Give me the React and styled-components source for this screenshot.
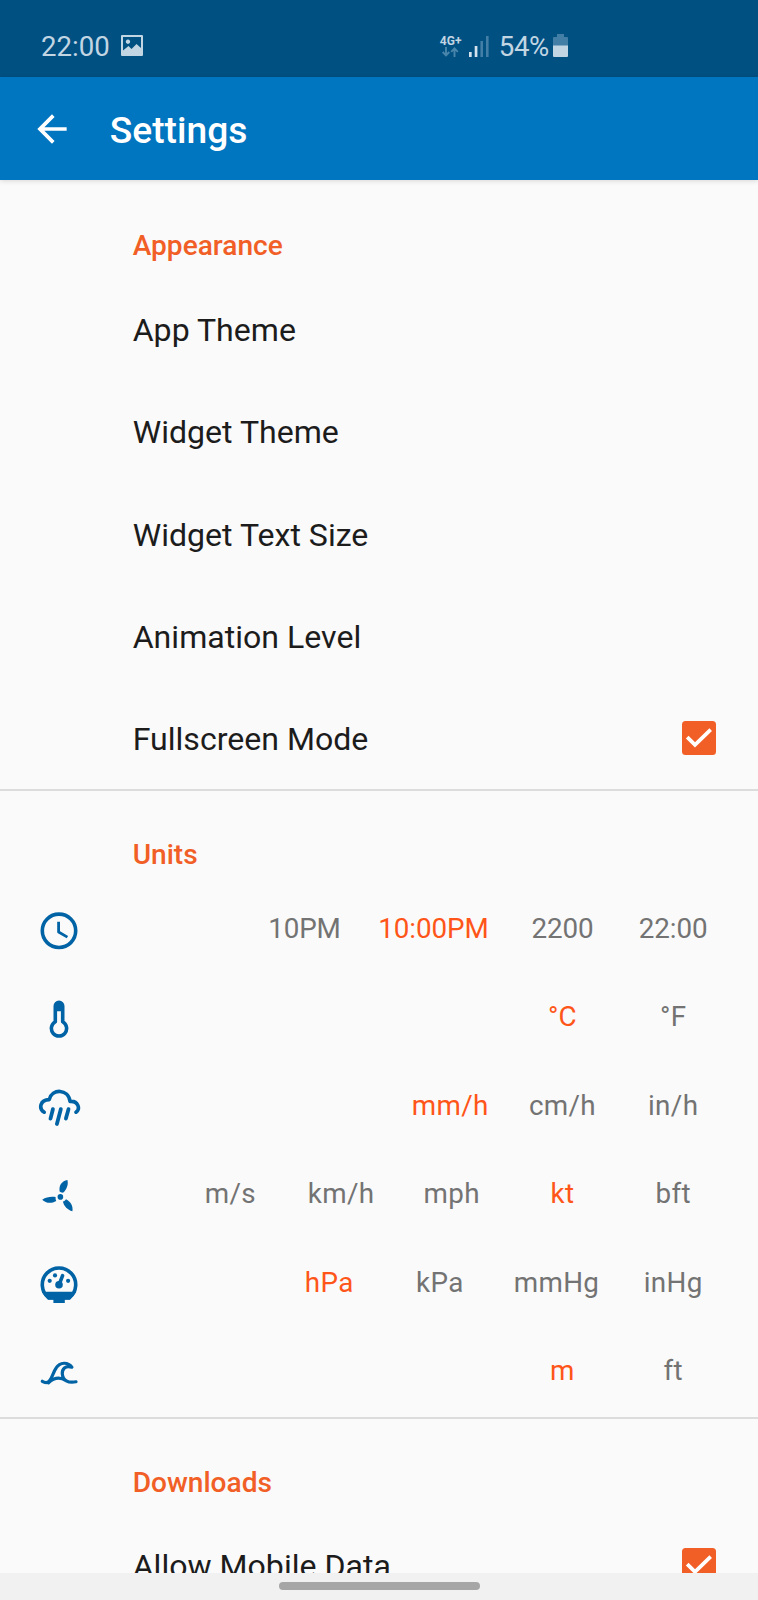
import React, { useState } from 'react';
import styled, { createGlobalStyle } from 'styled-components';

const GlobalStyle = createGlobalStyle`
  * {
    box-sizing: border-box;
  }

  body {
    margin: 0;
    background: #fafafa;
    font-family: Roboto, sans-serif;
    overflow: hidden;
  }
`;

const Screen = styled.div`
  display: flex;
  flex-direction: column;
  width: 758px;
  height: 1600px;
  background: #fafafa;
  overflow: hidden;
`;

const StatusBar = styled.header`
  display: flex;
  align-items: center;
  flex-shrink: 0;
  height: 77px;
  padding: 14px 190px 0 41px;
  background: #005082;
  color: #c2d5e2;
`;

const StatusText = styled.span`
  padding-top: 2px;
  font-size: 27.6px;
  line-height: 32px;
`;

const Percent = styled(StatusText)`
  margin: 0 4px 0 10px;
  letter-spacing: -0.3px;
`;

const StatusGroup = styled.div`
  display: flex;
  align-items: center;
  margin-left: auto;
`;

const PictureIcon = styled.svg`
  width: 22px;
  height: 21px;
  margin-left: 11px;
`;

const Network = styled.div`
  display: flex;
  flex-direction: column;
  align-items: center;
  width: 24px;
  margin-right: 6px;
`;

const NetworkLabel = styled.span`
  font-size: 12px;
  font-weight: 700;
  line-height: 12px;
`;

const AppBar = styled.div`
  display: flex;
  align-items: center;
  flex-shrink: 0;
  height: 103.4px;
  padding-left: 29.5px;
  background: #0075c0;
  color: #fff;
  box-shadow: 0 1px 5px rgba(0, 0, 0, 0.14);
  z-index: 1;
`;

const BackButton = styled.button`
  display: flex;
  width: 44px;
  height: 44px;
  padding: 0;
  border: 0;
  background: none;
  color: inherit;
`;

const Title = styled.h1`
  margin: 3.6px 0 0 36.3px;
  font-size: 37.2px;
  font-weight: 500;
  line-height: 44px;
`;

const Content = styled.main`
  flex: 1;
  min-height: 0;
  overflow: hidden;
`;

const Section = styled.section`
  padding-top: ${({ $first }) => ($first ? '31px' : '28.4px')};
  border-bottom: 2px solid #dcdcdc;
`;

const SectionTitle = styled.h2`
  height: 66.5px;
  margin: 0;
  padding: 1px 0 0 132.7px;
  font-size: 28.1px;
  font-weight: 500;
  line-height: 67px;
  color: #f15f27;
`;

const SettingRow = styled.div`
  display: flex;
  align-items: center;
  justify-content: space-between;
  height: 102.3px;
  padding: 0 42px 0 132.7px;
`;

const SettingLabel = styled.span`
  padding-top: 2px;
  font-size: 32.1px;
  line-height: 40px;
  color: #1c1c1c;
`;

const CheckButton = styled.button`
  display: flex;
  width: 34px;
  height: 34px;
  margin-bottom: 0.6px;
  padding: 0;
  border: ${({ $checked }) => ($checked ? '0' : '3px solid #757575')};
  border-radius: 3.5px;
  background: ${({ $checked }) => ($checked ? '#f15f27' : 'none')};
`;

const UnitRow = styled.div`
  display: flex;
  align-items: center;
  height: 88.5px;
  padding: 0 29.5px 0 37.3px;
`;

const UnitIcon = styled.svg`
  width: 44px;
  height: 44px;
  fill: none;
  stroke: #0063a5;
  stroke-width: 3.6;
  stroke-linecap: round;
  stroke-linejoin: round;
`;

const Options = styled.div`
  display: flex;
  margin-left: auto;
  padding-bottom: 4px;
  letter-spacing: ${({ $numeric }) => ($numeric ? '-0.1px' : '0.35px')};
`;

const Option = styled.button`
  min-width: 110.7px;
  padding: 0 18.5px;
  border: 0;
  background: none;
  font-family: inherit;
  font-size: 27.8px;
  line-height: 40px;
  letter-spacing: inherit;
  text-align: center;
  color: ${({ $active }) => ($active ? '#ff5519' : '#737373')};
`;

const NavBar = styled.footer`
  display: flex;
  justify-content: center;
  flex-shrink: 0;
  height: 27.4px;
  padding-top: 9.8px;
  background: #f1f1f1;
`;

const NavHandle = styled.div`
  width: 201px;
  height: 7.4px;
  border-radius: 4px;
  background: #a6a6a6;
`;

const icons = {
  time: (
    <>
      <circle cx="22" cy="21.8" r="16.7" />
      <path d="M21.6 12.8V23L30.4 28.1" strokeWidth="2.8" strokeLinecap="butt" />
    </>
  ),
  temperature: (
    <>
      <path d="M22 5.4a3.7 3.7 0 0 0-3.7 3.8V24.8a7.6 7.6 0 1 0 7.4 0V9.2A3.7 3.7 0 0 0 22 5.4Z" />
      <path d="M17.5 8.9a4.5 4.5 0 0 1 9 0V14.2h-9Z" fill="#0063a5" stroke="none" />
    </>
  ),
  rain: (
    <>
      <path d="M7.2 26.2C1.4 22.6 3 13.8 12.2 13.6C15 2.2 31.4 2.6 33 15.4C41.6 14.6 43.4 23.2 39 26.2" />
      <path d="M15.9 23.2L13.5 32.6M23.8 23.2L19.9 38M31.5 23.2L28.9 32.6" strokeWidth="3.8" />
    </>
  ),
  wind: (
    <g fill="#0063a5" stroke="none">
      <circle cx="23.4" cy="22.9" r="2.8" />
      <path d="M22.6 17.6C21.6 11 25 6.9 30.4 5.9C31.6 10.2 29.8 15 26.4 18.6C25 18.9 23.6 18.6 22.6 17.6Z" />
      <path d="M5.2 25.8C9.4 23 14 22.4 18.6 23.1C18.4 24.5 18.6 25.8 19.2 27C14.6 29.8 8.8 29.5 5.2 25.8Z" />
      <path d="M35.4 37.3C30.6 35.8 27 32.4 25.9 27.5C27.3 27.2 28.3 26.4 29 25.2C33.8 27.6 36.4 32.2 35.4 37.3Z" />
    </g>
  ),
  pressure: (
    <>
      <path d="M11.5 34.7A16.7 16.7 0 1 1 32.5 34.7Z" />
      <g fill="#0063a5" stroke="none">
        <path d="M4.6 28.7H39.4L33 36.7H27.8V40.1H16.4V36.7H11Z" />
        <circle cx="22" cy="21.8" r="3.8" />
        <circle cx="12.7" cy="17.8" r="2.1" />
        <circle cx="18" cy="12.4" r="2.1" />
        <circle cx="31.1" cy="17.8" r="2.1" />
      </g>
      <path d="M22 21.8L25.6 12.6" />
    </>
  ),
  wave: (
    <path
      d="M5.3 30.3C14 35.6 15 22.6 19 17.2C23 10.8 31 10.8 34.9 16.2C28 14 25 18.4 25.3 22.8C25.8 29.2 31 32.4 39 30.8M11.5 31.8C16 27.6 22 25.1 29 29.6"
      strokeWidth="3.2"
    />
  )
};

const appearanceSettings = ['App Theme', 'Widget Theme', 'Widget Text Size', 'Animation Level'];

const unitSettings = [
  { name: 'time', options: ['10PM', '10:00PM', '2200', '22:00'], initial: '10:00PM' },
  { name: 'temperature', options: ['°C', '°F'], initial: '°C' },
  { name: 'rain', options: ['mm/h', 'cm/h', 'in/h'], initial: 'mm/h' },
  { name: 'wind', options: ['m/s', 'km/h', 'mph', 'kt', 'bft'], initial: 'kt' },
  { name: 'pressure', options: ['hPa', 'kPa', 'mmHg', 'inHg'], initial: 'hPa' },
  { name: 'wave', options: ['m', 'ft'], initial: 'm' }
];

const CheckSetting = ({ label }) => {
  const [checked, setChecked] = useState(true);

  return (
    <SettingRow>
      <SettingLabel>{label}</SettingLabel>
      <CheckButton $checked={checked} aria-label={label} onClick={() => setChecked(!checked)}>
        {checked && (
          <svg width="34" height="34" viewBox="0 0 34 34" fill="none">
            <path d="M5.2 16.1L13 23.9L28.7 8.6" stroke="#fff" strokeWidth="3.7" />
          </svg>
        )}
      </CheckButton>
    </SettingRow>
  );
};

const UnitSetting = ({ name, options, initial }) => {
  const [selected, setSelected] = useState(initial);

  return (
    <UnitRow>
      <UnitIcon viewBox="0 0 44 44">{icons[name]}</UnitIcon>
      <Options $numeric={name === 'time'}>
        {options.map(option => (
          <Option key={option} $active={option === selected} onClick={() => setSelected(option)}>
            {option}
          </Option>
        ))}
      </Options>
    </UnitRow>
  );
};

const Status = () => (
  <StatusBar>
    <StatusText>22:00</StatusText>
    <PictureIcon viewBox="0 0 22 21">
      <path
        fill="currentColor"
        fillRule="evenodd"
        d="M1 0H21Q22 0 22 1V20Q22 21 21 21H1Q0 21 0 20V1Q0 0 1 0ZM2 2V15.5L7.5 11L10.5 14L15.5 9L20 13V2ZM7 4.5A2.2 2.2 0 1 1 6.9 4.5Z"
      />
    </PictureIcon>
    <StatusGroup>
      <Network>
        <NetworkLabel>4G+</NetworkLabel>
        <svg width="17" height="10" viewBox="0 0 17 10" fill="none">
          <path
            d="M4 0V8.4M.7 5L4 8.4L7.3 5M12.5 10V1.4M9.2 4.8L12.5 1.4L15.8 4.8"
            stroke="#4a86ab"
            strokeWidth="1.9"
          />
        </svg>
      </Network>
      <svg width="20" height="22" viewBox="0 0 20 22">
        <path d="M0 17H2.7V22H0ZM5.7 11H8.4V22H5.7Z" fill="#d3e2ec" />
        <path d="M11.4 6H14V22H11.4ZM17 1H19.6V22H17Z" fill="#437ea6" />
      </svg>
      <Percent>54%</Percent>
      <svg width="15" height="23" viewBox="0 0 15 23">
        <path d="M4 0H11V3H14Q15 3 15 4V12H0V4Q0 3 1 3H4Z" fill="#437ea6" />
        <path d="M0 11.5H15V22Q15 23 14 23H1Q0 23 0 22Z" fill="#c2d5e2" />
      </svg>
    </StatusGroup>
  </StatusBar>
);

const App = () => {
  return (
    <>
      <GlobalStyle />
      <Screen>
        <Status />
        <AppBar>
          <BackButton aria-label="Back">
            <svg width="44" height="44" viewBox="0 0 24 24" fill="currentColor">
              <path d="M20 11H7.83l5.59-5.59L12 4l-8 8 8 8 1.41-1.41L7.83 13H20v-2z" />
            </svg>
          </BackButton>
          <Title>Settings</Title>
        </AppBar>
        <Content>
          <Section $first>
            <SectionTitle>Appearance</SectionTitle>
            {appearanceSettings.map(label => (
              <SettingRow key={label}>
                <SettingLabel>{label}</SettingLabel>
              </SettingRow>
            ))}
            <CheckSetting label="Fullscreen Mode" />
          </Section>
          <Section>
            <SectionTitle>Units</SectionTitle>
            {unitSettings.map(unit => (
              <UnitSetting key={unit.name} {...unit} />
            ))}
          </Section>
          <Section>
            <SectionTitle>Downloads</SectionTitle>
            <CheckSetting label="Allow Mobile Data" />
          </Section>
        </Content>
        <NavBar>
          <NavHandle />
        </NavBar>
      </Screen>
    </>
  );
};

export default App;
